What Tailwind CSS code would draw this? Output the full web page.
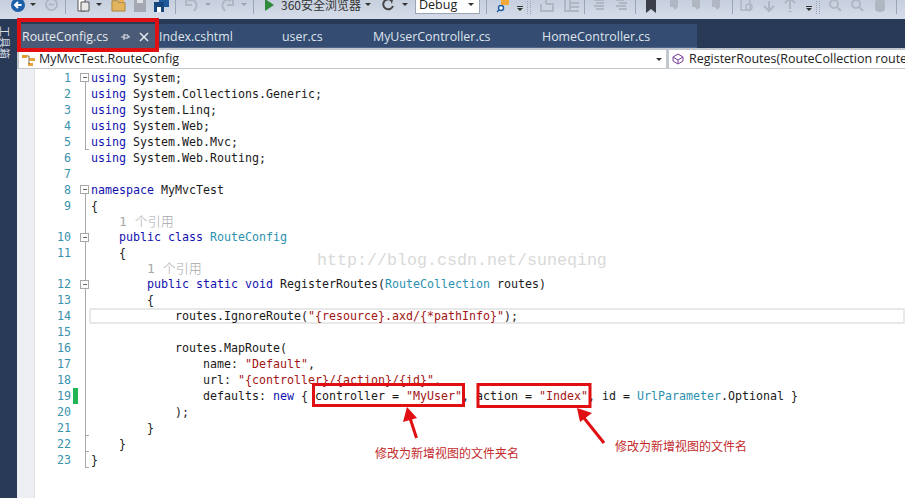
<!DOCTYPE html>
<html>
<head>
    <title>RouteConfig.cs</title>
    <script src="https://cdn.jsdelivr.net/npm/@tailwindcss/browser@4"></script>
</head>
<body class="w-[905px] h-[498px] overflow-hidden bg-white relative font-['Open_Sans','Noto_Sans_CJK_SC',sans-serif]">
    <!-- toolbar, cut off at the top of the shot -->
    <div class="h-[19px] bg-linear-to-b from-[#c6cfde] to-[#d6dce9] overflow-hidden">
        <div class="h-[19px] -mt-[5px] flex items-center text-[#333] relative whitespace-nowrap">
            <svg class="ml-[11px] w-[14px] h-[14px]" viewBox="0 0 14 14"><circle cx="7" cy="7" r="7" fill="#1e5fa8"/><path d="M10.500 7H4.500M7 4L4 7l3 3" stroke="#fff" stroke-width="2" fill="none"/></svg>
            <span class="ml-[5px] w-0 h-0 border-x-[3px] border-x-transparent border-t-[3px] border-t-[#333]"></span>
            <svg class="ml-[9px] w-[13px] h-[13px]" viewBox="0 0 14 14"><circle cx="7" cy="7" r="6" fill="none" stroke="#b0b6c2" stroke-width="2"/><path d="M4 7h6" stroke="#b0b6c2" stroke-width="2"/></svg>
            <span class="ml-[7px] w-px h-[19px] bg-[#9aa5b8]"></span>
            <svg class="ml-[9px] w-[16px] h-[16px]" viewBox="0 0 16 16"><path d="M3 2h7v12H3z" fill="#fff" stroke="#555"/><path d="M6 5h8v9H6z" fill="#e8e8e8" stroke="#555"/></svg>
            <span class="ml-[5px] w-0 h-0 border-x-[3px] border-x-transparent border-t-[3px] border-t-[#333]"></span>
            <svg class="ml-[9px] w-[15px] h-[15px]" viewBox="0 0 16 16"><path d="M1 4h6l1 2h7v9H1z" fill="#e3b45e" stroke="#a8843e"/><path d="M8 0h6v5H8z" fill="#f4a83a"/></svg>
            <svg class="ml-[7px] w-[14px] h-[14px]" viewBox="0 0 14 14"><path d="M1 0h12v14H1z" fill="#a3a8b2"/><path d="M4 0h6v5H4z" fill="#dfe2e8"/></svg>
            <svg class="ml-[7px] w-[15px] h-[15px]" viewBox="0 0 15 15"><path d="M5 0h10v10H5z" fill="#1f5a9a"/><path d="M0 5h10v10H0z" fill="#14477e"/><path d="M3 10h4v5H3z" fill="#fff"/></svg>
            <span class="ml-[6px] w-px h-[19px] bg-[#9aa5b8]"></span>
            <svg class="ml-[9px] w-[14px] h-[14px]" viewBox="0 0 14 14"><path d="M3 3c5-3 10 1 8 7l-2 3" fill="none" stroke="#b0b6c2" stroke-width="2"/><path d="M1 1v6h6" fill="none" stroke="#b0b6c2" stroke-width="2"/></svg>
            <span class="ml-[6px] w-0 h-0 border-x-[3px] border-x-transparent border-t-[3px] border-t-[#a0a4ac]"></span>
            <svg class="ml-[9px] w-[14px] h-[14px]" viewBox="0 0 14 14"><path d="M11 3C6 0 1 4 3 10l2 3" fill="none" stroke="#b0b6c2" stroke-width="2"/><path d="M13 1v6H7" fill="none" stroke="#b0b6c2" stroke-width="2"/></svg>
            <span class="ml-[7px] w-0 h-0 border-x-[3px] border-x-transparent border-t-[3px] border-t-[#a0a4ac]"></span>
            <span class="ml-[6px] w-px h-[19px] bg-[#9aa5b8]"></span>
            <span class="ml-[11px] w-0 h-0 border-y-[6px] border-y-transparent border-l-[9px] border-l-[#2f8a3a]"></span>
            <span class="ml-[7px] text-[12px] leading-[19px] font-['Noto_Sans_CJK_SC',sans-serif]">360安全浏览器</span>
            <span class="ml-[4px] w-0 h-0 border-x-[3px] border-x-transparent border-t-[3px] border-t-[#333]"></span>
            <svg class="ml-[10px] w-[14px] h-[14px]" viewBox="0 0 14 14"><path d="M11 3a5 5 0 1 0 1 5" fill="none" stroke="#444" stroke-width="2"/><path d="M8 0l4 1-1 5z" fill="#444"/></svg>
            <span class="ml-[7px] w-0 h-0 border-x-[3px] border-x-transparent border-t-[3px] border-t-[#333]"></span>
            <div class="ml-[7px] w-[65px] h-[19px] bg-white border border-[#9aa5b8] flex items-center justify-between pl-[3px] pr-[5px] text-[12.500px] leading-[17px] text-[#222]">
                <span>Debug</span>
                <span class="w-0 h-0 border-x-[3px] border-x-transparent border-t-[3px] border-t-[#333]"></span>
            </div>
            <span class="ml-[6px] w-px h-[19px] bg-[#9aa5b8]"></span>
            <svg class="ml-[9px] w-[14px] h-[16px]" viewBox="0 0 14 16"><path d="M5 0h8v8H5z" fill="#f2a93b"/><circle cx="5" cy="11" r="2.500" fill="#fff" stroke="#1e5fa8" stroke-width="1.500"/><path d="M3 13l-2 2" stroke="#1e5fa8" stroke-width="1.500"/></svg>
            <span class="ml-[7px] flex flex-col gap-px mt-[8px]"><span class="block w-[6px] h-px bg-[#333]"></span><span class="block w-0 h-0 border-x-[3px] border-x-transparent border-t-[3px] border-t-[#333]"></span></span>
            <span class="ml-[4px] w-[4px] h-[19px] border-x border-dotted border-[#9aa5b8]"></span>
            <svg class="ml-[9px] w-[14px] h-[14px]" viewBox="0 0 14 14"><path d="M1 1h5v5M1 6v7h12V6H6" fill="none" stroke="#b0b6c2" stroke-width="2"/></svg>
            <svg class="ml-[10px] w-[16px] h-[14px]" viewBox="0 0 16 14"><path d="M1 1h5v12H1zM6 5h9M6 9h9M6 13h9" fill="none" stroke="#b0b6c2" stroke-width="2"/></svg>
            <span class="ml-[4px] w-px h-[19px] bg-[#9aa5b8]"></span>
            <svg class="ml-[7px] w-[14px] h-[14px]" viewBox="0 0 14 14"><path d="M2 2h10M4 5h8M2 8h10M4 11h8" stroke="#b0b6c2" stroke-width="2"/></svg>
            <svg class="ml-[9px] w-[14px] h-[14px]" viewBox="0 0 14 14"><path d="M1 2h8M4 5h8M1 8h10M4 11h8" stroke="#b0b6c2" stroke-width="2"/></svg>
            <span class="ml-[6px] w-px h-[19px] bg-[#9aa5b8]"></span>
            <svg class="ml-[10px] w-[10px] h-[16px]" viewBox="0 0 10 16"><path d="M0 0h10v16L5 12 0 16z" fill="#3a3f4a"/></svg>
            <svg class="ml-[12px] w-[14px] h-[14px]" viewBox="0 0 14 14"><path d="M2 1h8v8l-3 3-2-3H2z" fill="#b0b6c2"/></svg>
            <svg class="ml-[8px] w-[14px] h-[14px]" viewBox="0 0 14 14"><path d="M2 1h8v8l-3 3-2-3H2z" fill="#b0b6c2"/></svg>
            <svg class="ml-[6px] w-[14px] h-[14px]" viewBox="0 0 14 14"><path d="M2 1h8v8l-3 3-2-3H2z" fill="#b0b6c2"/></svg>
            <span class="ml-[8px] w-px h-[19px] bg-[#9aa5b8]"></span>
            <svg class="ml-[7px] w-[14px] h-[14px]" viewBox="0 0 14 14"><path d="M1 1h9v11H1z" fill="none" stroke="#b0b6c2" stroke-width="1.500"/><circle cx="9" cy="9" r="3" fill="none" stroke="#b0b6c2" stroke-width="1.500"/></svg>
            <svg class="ml-[9px] w-[12px] h-[15px]" viewBox="0 0 12 15"><path d="M6 15V4M1 9l5 5 5-5M4 0h4" fill="none" stroke="#b0b6c2" stroke-width="2"/></svg>
            <svg class="ml-[9px] w-[12px] h-[15px]" viewBox="0 0 12 15"><path d="M6 1v11M1 6l5-5 5 5M4 15h4" fill="none" stroke="#b0b6c2" stroke-width="2"/></svg>
            <span class="ml-[10px] flex flex-col gap-px mt-[8px]"><span class="block w-[6px] h-px bg-[#333]"></span><span class="block w-0 h-0 border-x-[3px] border-x-transparent border-t-[3px] border-t-[#333]"></span></span>
            <span class="ml-[4px] w-[4px] h-[19px] border-x border-dotted border-[#9aa5b8]"></span>
            <svg class="ml-[8px] w-[14px] h-[14px]" viewBox="0 0 14 14"><circle cx="6" cy="6" r="4" fill="none" stroke="#b0b6c2" stroke-width="2"/><path d="M9 9l4 4" stroke="#b0b6c2" stroke-width="2"/></svg>
            <svg class="ml-[8px] w-[14px] h-[14px]" viewBox="0 0 14 14"><circle cx="6" cy="6" r="4" fill="none" stroke="#b0b6c2" stroke-width="2"/><path d="M9 9l4 4" stroke="#b0b6c2" stroke-width="2"/></svg>
            <svg class="ml-[9px] w-[14px] h-[16px]" viewBox="0 0 14 16"><path d="M2 6c0-6 10-6 10 0v6c0 4-10 4-10 0z" fill="#b0b6c2"/></svg>
            <span class="ml-[9px] w-px h-[19px] bg-[#9aa5b8]"></span>
        </div>
    </div>

    <div class="flex h-[479px]">
        <!-- toolbox strip -->
        <div class="w-[17px] shrink-0 bg-[#293a56] overflow-hidden pt-[7px]">
            <div class="[writing-mode:vertical-rl] [text-orientation:sideways] text-[11px] leading-[10px] w-[10px] text-[#d8dde6] font-['Noto_Sans_CJK_SC',sans-serif]">工具箱</div>
        </div>

        <div class="flex-1 min-w-0 flex flex-col">
            <!-- tab well -->
            <div class="h-[29px] shrink-0 bg-[#293a56] pt-[5px] pl-[3px] flex">
                <div class="w-[135px] h-[24px] bg-[#4a5b78] text-[#e6e9ee] text-[12.400px] pt-[2px] pl-[2px] flex items-center">
                    <span>RouteConfig.cs</span>
                    <svg class="ml-[13px] w-[9px] h-[9px]" viewBox="0 0 9 9"><path d="M3 1v6M3 2h4v3H3M0 4h3M7 4h2" fill="none" stroke="#e6e9ee"/></svg>
                    <svg class="ml-[9px] w-[10px] h-[10px]" viewBox="0 0 10 10"><path d="M1 1l8 8M9 1L1 9" stroke="#e6e9ee" stroke-width="1.500"/></svg>
                </div>
                <div class="w-[542px] h-[24px] bg-[#344c72] text-[#dfe4ec] text-[12.400px] leading-[25px] flex border-b border-[#4f6484]">
                    <span class="w-[127px] pl-[4px]">Index.cshtml</span>
                    <span class="w-[91px]">user.cs</span>
                    <span class="w-[169px]">MyUserController.cs</span>
                    <span>HomeController.cs</span>
                </div>
            </div>

            <!-- type and member combos -->
            <div class="h-[21px] shrink-0 bg-[#c3c7ce] flex gap-[3px] pl-[2px] pt-[2px] text-[12.500px] text-[#222] leading-[18px]">
                <div class="w-[647px] h-[18px] bg-white flex items-center pl-[2px] pr-[4px]">
                    <svg class="w-[15px] h-[13px] shrink-0" viewBox="0 0 15 13"><path d="M1 2h5v3H1z" fill="#e49b2e"/><path d="M9 5h5v3H9zM7 10h5v3H7z" fill="#e8a33a"/><path d="M6 3h2v8M8 6h1" fill="none" stroke="#8a6a30"/></svg>
                    <span class="ml-[3px]">MyMvcTest.RouteConfig</span>
                    <span class="ml-auto w-0 h-0 border-x-[3px] border-x-transparent border-t-[3px] border-t-[#333]"></span>
                </div>
                <div class="flex-1 h-[18px] bg-white flex items-center pl-[3px] overflow-hidden whitespace-nowrap">
                    <svg class="w-[12px] h-[12px] shrink-0" viewBox="0 0 12 12"><path d="M6 1l5 3v4l-5 3-5-3V4z" fill="none" stroke="#7a3e9d"/><path d="M1 4l5 3 5-3M6 7v4" fill="none" stroke="#7a3e9d"/></svg>
                    <span class="ml-[5px]">RegisterRoutes(RouteCollection routes)</span>
                </div>
            </div>

            <!-- editor -->
            <div class="flex-1 flex font-['DejaVu_Sans_Mono',monospace] text-[11.630px] leading-[16px] text-[#1a1a1a] whitespace-pre">
                <div class="w-[18px] shrink-0 bg-[#eeeff2] border-r border-[#e2e2e2]"></div>
                <div class="flex-1 min-w-0 flex flex-col pt-px">
                    <div class="flex h-[16px]"><span class="w-[36px] text-right text-[#3a93ad]">1</span><span class="w-[20px]"></span><span><span class="text-[#1111b0]">using</span> System;</span></div>
                    <div class="flex h-[16px]"><span class="w-[36px] text-right text-[#3a93ad]">2</span><span class="w-[20px]"></span><span><span class="text-[#1111b0]">using</span> System.Collections.Generic;</span></div>
                    <div class="flex h-[16px]"><span class="w-[36px] text-right text-[#3a93ad]">3</span><span class="w-[20px]"></span><span><span class="text-[#1111b0]">using</span> System.Linq;</span></div>
                    <div class="flex h-[16px]"><span class="w-[36px] text-right text-[#3a93ad]">4</span><span class="w-[20px]"></span><span><span class="text-[#1111b0]">using</span> System.Web;</span></div>
                    <div class="flex h-[16px]"><span class="w-[36px] text-right text-[#3a93ad]">5</span><span class="w-[20px]"></span><span><span class="text-[#1111b0]">using</span> System.Web.Mvc;</span></div>
                    <div class="flex h-[16px]"><span class="w-[36px] text-right text-[#3a93ad]">6</span><span class="w-[20px]"></span><span><span class="text-[#1111b0]">using</span> System.Web.Routing;</span></div>
                    <div class="flex h-[16px]"><span class="w-[36px] text-right text-[#3a93ad]">7</span></div>
                    <div class="flex h-[16px]"><span class="w-[36px] text-right text-[#3a93ad]">8</span><span class="w-[20px]"></span><span><span class="text-[#1111b0]">namespace</span> MyMvcTest</span></div>
                    <div class="flex h-[16px]"><span class="w-[36px] text-right text-[#3a93ad]">9</span><span class="w-[20px]"></span><span>{</span></div>
                    <div class="h-[15px] leading-[15px] pl-[84px] text-[13px] text-[#a8a8a8] font-['DejaVu_Sans_Mono','Noto_Sans_CJK_SC',monospace] font-light">1 个引用</div>
                    <div class="flex h-[16px]"><span class="w-[36px] text-right text-[#3a93ad]">10</span><span class="w-[20px]"></span><span>    <span class="text-[#1111b0]">public class</span> <span class="text-[#2b91af]">RouteConfig</span></span></div>
                    <div class="flex h-[16px]"><span class="w-[36px] text-right text-[#3a93ad]">11</span><span class="w-[20px]"></span><span>    {</span></div>
                    <div class="h-[15px] leading-[15px] pl-[112px] text-[13px] text-[#a8a8a8] font-['DejaVu_Sans_Mono','Noto_Sans_CJK_SC',monospace] font-light">1 个引用</div>
                    <div class="flex h-[16px]"><span class="w-[36px] text-right text-[#3a93ad]">12</span><span class="w-[20px]"></span><span>        <span class="text-[#1111b0]">public static void</span> RegisterRoutes(<span class="text-[#2b91af]">RouteCollection</span> routes)</span></div>
                    <div class="flex h-[16px]"><span class="w-[36px] text-right text-[#3a93ad]">13</span><span class="w-[20px]"></span><span>        {</span></div>
                    <div class="flex h-[16px]"><span class="w-[36px] text-right text-[#3a93ad]">14</span><span class="w-[18px]"></span><span class="flex-1 pl-[2px] rounded-[2px] shadow-[inset_0_0_0_2px_#e8e8e8]">            routes.IgnoreRoute(<span class="text-[#a31515]">"{resource}.axd/{*pathInfo}"</span>);</span></div>
                    <div class="flex h-[16px]"><span class="w-[36px] text-right text-[#3a93ad]">15</span></div>
                    <div class="flex h-[16px]"><span class="w-[36px] text-right text-[#3a93ad]">16</span><span class="w-[20px]"></span><span>            routes.MapRoute(</span></div>
                    <div class="flex h-[16px]"><span class="w-[36px] text-right text-[#3a93ad]">17</span><span class="w-[20px]"></span><span>                name: <span class="text-[#a31515]">"Default"</span>,</span></div>
                    <div class="flex h-[16px]"><span class="w-[36px] text-right text-[#3a93ad]">18</span><span class="w-[20px]"></span><span>                url: <span class="text-[#a31515]">"{controller}/{action}/{id}"</span>,</span></div>
                    <div class="flex h-[16px]"><span class="w-[36px] text-right text-[#3a93ad]">19</span><span class="w-[2px]"></span><span class="w-[5px] bg-[#22b455]"></span><span class="w-[13px]"></span><span>                defaults: <span class="text-[#1111b0]">new</span> { controller = <span class="text-[#a31515]">"MyUser"</span>, action = <span class="text-[#a31515]">"Index"</span>, id = <span class="text-[#2b91af]">UrlParameter</span>.Optional }</span></div>
                    <div class="flex h-[16px]"><span class="w-[36px] text-right text-[#3a93ad]">20</span><span class="w-[20px]"></span><span>            );</span></div>
                    <div class="flex h-[16px]"><span class="w-[36px] text-right text-[#3a93ad]">21</span><span class="w-[20px]"></span><span>        }</span></div>
                    <div class="flex h-[16px]"><span class="w-[36px] text-right text-[#3a93ad]">22</span><span class="w-[20px]"></span><span>    }</span></div>
                    <div class="flex h-[16px]"><span class="w-[36px] text-right text-[#3a93ad]">23</span><span class="w-[20px]"></span><span>}</span></div>
                </div>
            </div>
        </div>
    </div>

    <!-- fold margin, red markup and arrows drawn over the editor -->
    <svg class="absolute left-0 top-0 pointer-events-none" width="905" height="498" viewBox="0 0 905 498">
        <g fill="none" stroke="#a8a8a8" stroke-width="1" shape-rendering="crispEdges">
            <path d="M85.500 82V149.500H89"/>
            <path d="M85.500 194V467.500H89"/>
            <path d="M85.500 435.500H89M85.500 451.500H89"/>
            <path d="M80.500 73.500h8v8h-8zM80.500 185.500h8v8h-8zM80.500 233.500h8v8h-8zM80.500 280.500h8v8h-8z" fill="#fff"/>
            <path d="M82.500 77.500h4M82.500 189.500h4M82.500 237.500h4M82.500 284.500h4" stroke="#666"/>
        </g>
        <g fill="none" stroke="#e00f12">
            <rect x="19" y="20" width="138" height="30" stroke-width="4"/>
            <rect x="313.500" y="384.500" width="150" height="21" stroke-width="3"/>
            <rect x="478" y="384.500" width="112" height="22" stroke-width="3"/>
        </g>
        <g stroke="#e00f12" stroke-width="3" fill="#e00f12">
            <path d="M416.500 438L410 418" fill="none"/>
            <path d="M407 407L403 422L417 418z" stroke="none"/>
            <path d="M604 443L584 418" fill="none"/>
            <path d="M577 408L580 422L592 413z" stroke="none"/>
        </g>
    </svg>
    <div class="absolute left-[317px] top-[251px] font-['Liberation_Mono',monospace] text-[16.670px] leading-[20px] text-[#d9d9d9]">http://blog.csdn.net/suneqing</div>
    <div class="absolute left-[375px] top-[445px] text-[12px] leading-[16px] text-[#c22a2c] font-['Noto_Sans_CJK_SC',sans-serif]">修改为新增视图的文件夹名</div>
    <div class="absolute left-[615px] top-[438px] text-[12px] leading-[16px] text-[#c22a2c] font-['Noto_Sans_CJK_SC',sans-serif]">修改为新增视图的文件名</div>
</body>
</html>
